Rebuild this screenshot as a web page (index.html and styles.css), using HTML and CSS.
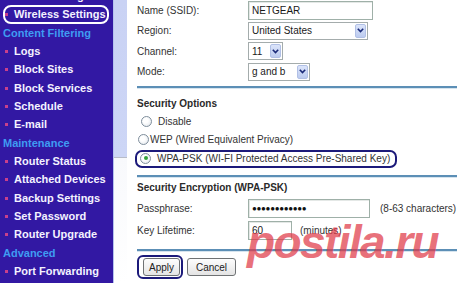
FILE: index.html
```html
<!DOCTYPE html>
<html>
<head>
<meta charset="utf-8">
<link rel="stylesheet" href="styles.css">
</head>
<body>
<div class="side">
  <nav class="menu">
    <div class="item">Basic Settings</div>
    <div class="item current">Wireless Settings</div>
    <div class="head">Content Filtering</div>
    <div class="item">Logs</div>
    <div class="item">Block Sites</div>
    <div class="item">Block Services</div>
    <div class="item">Schedule</div>
    <div class="item">E-mail</div>
    <div class="head">Maintenance</div>
    <div class="item">Router Status</div>
    <div class="item">Attached Devices</div>
    <div class="item">Backup Settings</div>
    <div class="item">Set Password</div>
    <div class="item">Router Upgrade</div>
    <div class="head">Advanced</div>
    <div class="item">Port Forwarding</div>
  </nav>
</div>
<div class="gutter"></div>
<main class="content">
  <div class="grid basic">
    <div class="label">Name (SSID):</div>
    <div class="field"><span class="input w-ssid">NETGEAR</span></div>
    <div class="label">Region:</div>
    <div class="field"><span class="select w-region"><span class="val">United States</span><span class="arrow"><svg width="7" height="5" viewBox="0 0 7 5"><path d="M0.8 0.8 L3.5 3.6 L6.2 0.8" fill="none" stroke="#1a2a78" stroke-width="1.6"/></svg></span></span></div>
    <div class="label">Channel:</div>
    <div class="field"><span class="select w-channel"><span class="val">11</span><span class="arrow"><svg width="7" height="5" viewBox="0 0 7 5"><path d="M0.8 0.8 L3.5 3.6 L6.2 0.8" fill="none" stroke="#1a2a78" stroke-width="1.6"/></svg></span></span></div>
    <div class="label">Mode:</div>
    <div class="field"><span class="select w-mode"><span class="val">g and b</span><span class="arrow"><svg width="7" height="5" viewBox="0 0 7 5"><path d="M0.8 0.8 L3.5 3.6 L6.2 0.8" fill="none" stroke="#1a2a78" stroke-width="1.6"/></svg></span></span></div>
  </div>
  <div class="rule r1"></div>
  <div class="title t1">Security Options</div>
  <div class="radios">
    <div class="radio-row opt-disable"><span class="radio"></span><span>Disable</span></div>
    <div class="radio-row opt-wep"><span class="radio"></span><span>WEP (Wired Equivalent Privacy)</span></div>
    <div class="radio-row opt-wpa"><span class="radio on"></span><span>WPA-PSK (WI-FI Protected Access Pre-Shared Key)</span></div>
  </div>
  <div class="rule r2"></div>
  <div class="title t2">Security Encryption (WPA-PSK)</div>
  <div class="grid enc">
    <div class="label">Passphrase:</div>
    <div class="field"><span class="input w-pass dots">●●●●●●●●●●●●</span><span class="hint hint-pass">(8-63 characters)</span></div>
    <div class="label">Key Lifetime:</div>
    <div class="field"><span class="input w-life">60</span><span class="hint hint-life">(minutes)</span></div>
  </div>
  <div class="rule r3"></div>
  <div class="buttons">
    <span class="focus"><span class="btn btn-apply">Apply</span></span>
    <span class="btn btn-cancel">Cancel</span>
  </div>
</main>
<div class="watermark">postila.ru</div>
</body>
</html>
```
FILE: styles.css
```css
html, body {
  margin: 0;
  padding: 0;
}
body {
  width: 460px;
  height: 283px;
  overflow: hidden;
  display: flex;
  position: relative;
  background: #ffffff;
  font-family: "Liberation Sans", Arial, sans-serif;
}
.side {
  width: 113px;
  flex: none;
  background: #3218a3;
  overflow: hidden;
}
.menu {
  margin-top: -13px;
  display: flex;
  flex-direction: column;
}
.item, .head {
  height: 18.35px;
  line-height: 18.35px;
  font-size: 11px;
  font-weight: bold;
  white-space: nowrap;
  position: relative;
}
.item {
  color: #f4f2ff;
  padding-left: 14px;
}
.item::before {
  content: "";
  position: absolute;
  left: 5px;
  top: 8px;
  width: 3px;
  height: 3px;
  background: #c8408c;
}
.head {
  color: #3f9cf2;
  padding-left: 3px;
}
.current::after {
  content: "";
  position: absolute;
  left: 3px;
  right: 4px;
  top: -0.5px;
  bottom: -0.5px;
  border: 2px solid #ffffff;
  border-radius: 8px;
}
.gutter {
  width: 14px;
  flex: none;
  background: linear-gradient(to bottom, #c9d2f4 0, #cdd6f6 157px, #b8bcc8 157px, #b8bcc8 158px, #f8f9fc 158px, #ffffff 100%);
  border-left: 1px solid #b5c3ee;
  box-sizing: border-box;
}
.content {
  flex: 1;
  padding: 0 3px 0 10px;
  font-size: 10px;
  color: #333333;
}
.grid {
  display: grid;
  grid-template-columns: 111px 1fr;
  align-items: center;
}
.basic {
  grid-auto-rows: 20px;
  row-gap: 0.5px;
}
.label {
  white-space: nowrap;
}
.field {
  display: flex;
  align-items: center;
}
.input {
  display: inline-flex;
  align-items: center;
  box-sizing: border-box;
  height: 19px;
  padding-left: 3px;
  border: 1px solid #9fb0a8;
  box-shadow: inset 1px 1px 0 #e4e8e6;
  background: #fff;
  color: #1a1a1a;
  font-size: 10px;
}
.w-ssid { width: 125px; }
.select {
  display: inline-flex;
  align-items: center;
  justify-content: space-between;
  box-sizing: border-box;
  height: 18px;
  padding: 0 1px 0 3px;
  border: 1px solid #a4acac;
  background: #fff;
  color: #1a1a1a;
}
.w-region { width: 120px; }
.w-channel { width: 35px; }
.w-mode { width: 62px; }
.arrow {
  display: inline-flex;
  align-items: center;
  justify-content: center;
  width: 11px;
  height: 14px;
  box-sizing: border-box;
  border: 1px solid #b1c0e6;
  border-radius: 2px;
  background: linear-gradient(#dbe4fa, #bccbef);
}
.rule {
  height: 0;
  border-top: 2px solid #5c8fb6;
  box-shadow: 0 1px 0 #d6e4ee;
}
.r1 { margin-top: 4.5px; }
.r2 { margin-top: 7.5px; }
.r3 { margin-top: 8px; }
.title {
  font-weight: bold;
  line-height: 16px;
  color: #2a2a2a;
}
.t1 { margin-top: 8px; }
.t2 { margin-top: 3px; }
.radios {
  display: flex;
  flex-direction: column;
}
.radio-row {
  height: 18.5px;
  display: flex;
  align-items: center;
  white-space: nowrap;
  position: relative;
}
.radio {
  width: 9px;
  height: 9px;
  border-radius: 50%;
  border: 1px solid #7f8e9c;
  background: radial-gradient(circle at 40% 40%, #ffffff 30%, #dde2e8 100%);
  position: relative;
  flex: none;
}
.radio.on::after {
  content: "";
  position: absolute;
  left: 2.5px;
  top: 2.5px;
  width: 4px;
  height: 4px;
  border-radius: 50%;
  background: #33a33a;
}
.opt-disable { padding-left: 4px; gap: 6px; }
.opt-wep { padding-left: 1px; gap: 1px; }
.opt-wpa { padding-left: 3px; gap: 6px; }
.opt-wpa::before {
  content: "";
  position: absolute;
  left: -2px;
  top: 1px;
  width: 262px;
  height: 18px;
  box-sizing: border-box;
  border: 2px solid #1c1a7a;
  border-radius: 7px;
}
.enc {
  margin-top: 1px;
  grid-auto-rows: 22px;
}
.w-pass {
  width: 122px;
  font-size: 8px;
  letter-spacing: -0.3px;
  color: #111;
}
.w-life { width: 44px; }
.hint-pass { margin-left: 10px; }
.hint-life { margin-left: 8px; }
.buttons {
  margin-top: 4px;
  display: flex;
  align-items: flex-start;
}
.focus {
  display: inline-flex;
  padding: 1px 1px 1px 4px;
  border: 2px solid #1c1a7a;
  border-radius: 6px;
}
.btn {
  display: inline-flex;
  align-items: center;
  justify-content: center;
  box-sizing: border-box;
  height: 18px;
  border: 1px solid #6f7274;
  border-radius: 3px;
  background: linear-gradient(#fdfdfd, #e4e4e4);
  color: #222;
  font-size: 10px;
}
.btn-apply { width: 37px; }
.btn-cancel { width: 49px; margin-left: 4px; margin-top: 3px; }
.watermark {
  position: absolute;
  left: 247px;
  top: 219px;
  font-size: 46px;
  line-height: 46px;
  font-weight: bold;
  font-style: italic;
  letter-spacing: -1.6px;
  color: rgba(224, 58, 72, 0.72);
  white-space: nowrap;
}
```
